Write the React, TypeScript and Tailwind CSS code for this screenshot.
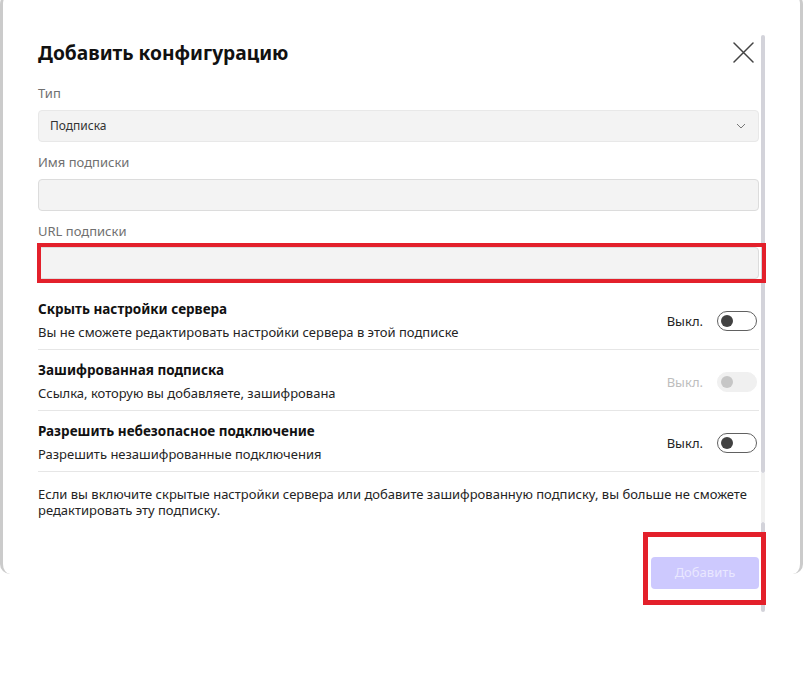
import React from "react";

function Toggle({ disabled = false }: { disabled?: boolean }) {
  return (
    <div className="flex items-center gap-[14px]">
      <span className={disabled ? "text-[13px] leading-[20px] text-[#bdbdbd]" : "text-[13px] leading-[20px] text-[#242424]"}>Выкл.</span>
      <div
        className={
          disabled
            ? "flex h-[20px] w-[40px] items-center rounded-full border border-[#f0f0f0] bg-[#f0f0f0]"
            : "flex h-[20px] w-[40px] items-center rounded-full border border-[#616161] bg-white"
        }
      >
        <div className={disabled ? "ml-[3px] h-[12px] w-[12px] rounded-full bg-[#c6c6c6]" : "ml-[3px] h-[12px] w-[12px] rounded-full bg-[#424242]"} />
      </div>
    </div>
  );
}

function Row({ title, sub, disabled = false }: { title: string; sub: string; disabled?: boolean }) {
  return (
    <div className="flex items-center justify-between border-b border-[#e6e6e6] pt-[10px] pb-[7px]">
      <div className="flex flex-col">
        <div className="text-[13.5px] font-bold leading-[20px] text-[#111]">{title}</div>
        <div className="mt-[3px] text-[13px] leading-[20px] text-[#242424]">{sub}</div>
      </div>
      <div className="mr-[2px]">
        <Toggle disabled={disabled} />
      </div>
    </div>
  );
}

export default function App() {
  return (
    <div className="relative h-[688px] w-[807px] overflow-hidden bg-white font-['Noto_Sans',sans-serif]">
      {/* underlying window frame */}
      <div className="absolute left-0 top-[-6px] h-[580px] w-[803px] rounded-[10px] border-x-[3px] border-[#cbcbcb]" />

      <div className="relative flex pl-[38px]">
        <div className="flex w-[721px] flex-col pt-[39px]">
          <div className="flex h-[28px] items-start justify-between">
            <h2 className="text-[19.2px] font-bold leading-[28px] text-[#111]">Добавить конфигурацию</h2>
            <svg className="mt-[3px] mr-[5px]" width="21" height="21" viewBox="0 0 21 21" fill="none">
              <path d="M1 1 L20 20 M20 1 L1 20" stroke="#444" strokeWidth="1.5" strokeLinecap="round" />
            </svg>
          </div>

          <div className="mt-[16px] text-[13px] leading-[20px] text-[#707070]">Тип</div>
          <div className="mt-[7px] flex h-[32px] items-center justify-between rounded-[4px] border border-[#e8e8e8] bg-[#f3f3f3] pl-[11px] pr-[12px]">
            <span className="text-[12px] text-[#333]">Подписка</span>
            <svg width="10" height="6" viewBox="0 0 10 6" fill="none">
              <path d="M1 1 L5 5 L9 1" stroke="#777" strokeWidth="1" />
            </svg>
          </div>

          <div className="mt-[10px] text-[13px] leading-[20px] text-[#707070]">Имя подписки</div>
          <div className="mt-[7px] h-[32px] rounded-[4px] border border-[#dcdcdc] bg-[#f3f3f3]" />

          <div className="mt-[10px] text-[13px] leading-[20px] text-[#707070]">URL подписки</div>
          <div className="mt-[6px] h-[32px] rounded-[4px] border border-[#dcdcdc] bg-[#f3f3f3]" />

          <div className="mt-[10px] flex flex-col">
            <Row title="Скрыть настройки сервера" sub="Вы не сможете редактировать настройки сервера в этой подписке" />
            <Row title="Зашифрованная подписка" sub="Ссылка, которую вы добавляете, зашифрована" disabled />
            <Row title="Разрешить небезопасное подключение" sub="Разрешить незашифрованные подключения" />
          </div>

          <p className="mt-[14px] text-[13px] leading-[16px] text-[#242424]">
            Если вы включите скрытые настройки сервера или добавите зашифрованную подписку, вы больше не сможете редактировать эту подписку.
          </p>

          <button className="mt-[39px] flex h-[32px] w-[108px] items-center justify-center self-end rounded-[4px] bg-[#cdc9fe] text-[13px] text-[#e9e7ff]">
            Добавить
          </button>
        </div>

        <div className="ml-[2px] mt-[35px] flex w-[4px] flex-col">
          <div className="h-[438px] rounded-full bg-[#d3d3da]" />
          <div className="h-[49px] bg-[#f0f0f0]" />
          <div className="h-[90px] rounded-full bg-[#d3d3da]" />
        </div>
      </div>

      {/* annotation boxes */}
      <div className="absolute left-[37px] top-[243px] h-[40px] w-[729px] border-[4px] border-[#e3202b]" />
      <div className="absolute left-[643px] top-[532px] h-[73px] w-[123px] border-[5px] border-[#e3202b]" />
    </div>
  );
}
